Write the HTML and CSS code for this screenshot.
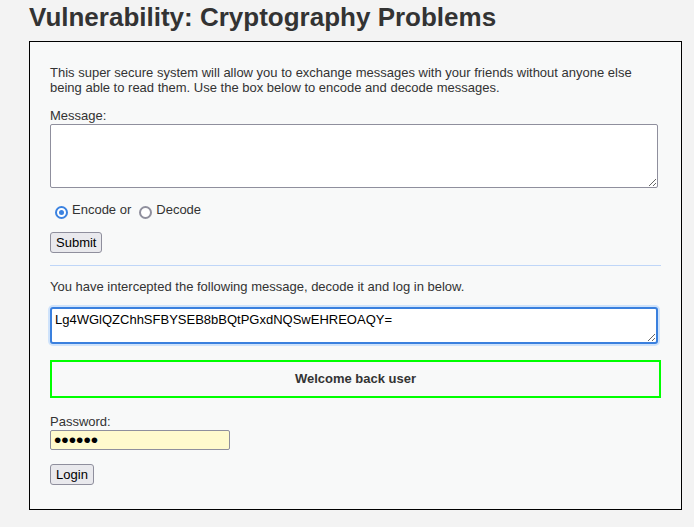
FILE: index.html
```html
<!DOCTYPE html>
<html>
<head>
<meta charset="utf-8">
<link rel="stylesheet" href="styles.css">
</head>
<body>
<div class="page">
  <h1 class="title">Vulnerability: Cryptography Problems</h1>
  <div class="area">
    <p class="intro">This super secure system will allow you to exchange messages with your friends without anyone else being able to read them. Use the box below to encode and decode messages.</p>
    <div class="label first">Message:</div>
    <textarea class="msg"></textarea>
    <div class="radios">
      <input type="radio" class="radio" name="d" checked><span class="rlabel">Encode or</span>
      <input type="radio" class="radio second" name="d"><span class="rlabel">Decode</span>
    </div>
    <button class="btn submit">Submit</button>
    <div class="rule"></div>
    <p class="line">You have intercepted the following message, decode it and log in below.</p>
    <textarea class="msg focused">Lg4WGlQZChhSFBYSEB8bBQtPGxdNQSwEHREOAQY=</textarea>
    <div class="welcome">Welcome back user</div>
    <div class="label pw">Password:</div>
    <input type="password" class="pass" value="abc123">
    <button class="btn login">Login</button>
  </div>
</div>
</body>
</html>
```

FILE: styles.css
```css
html, body {
  margin: 0;
  padding: 0;
  background: #f3f3f3;
}
body {
  font-family: "Liberation Sans", Arial, sans-serif;
  font-size: 13px;
  color: #333;
}
.page {
  padding: 0 12px 0 29px;
}
.title {
  margin: 0;
  font-size: 26px;
  line-height: 34px;
  font-weight: bold;
  color: #333;
  height: 41px;
}
.area {
  border: 1px solid #000;
  background: #f8f9f9;
  padding: 23px 20px 24px 20px;
  display: flex;
  flex-direction: column;
  align-items: flex-start;
}
.intro {
  margin: 0;
  line-height: 15px;
  width: 100%;
}
.label {
  line-height: 15px;
}
.label.first {
  margin-top: 13px;
}
.msg {
  display: block;
  box-sizing: border-box;
  width: 608px;
  height: 64px;
  margin: 1px 0 0 0;
  border: 1px solid #8f8f9d;
  border-radius: 2px;
  background: #fff;
  font-family: "Liberation Sans", Arial, sans-serif;
  font-size: 13px;
  color: #000;
  padding: 2px 3px;
}
.msg.focused {
  margin-top: 13px;
  height: 37px;
  border: 2px solid #3a80de;
  border-radius: 3px;
  box-shadow: 0 0 0 2px #cfe3fb;
  padding: 3px 3px;
  line-height: 15px;
  outline: none;
}
.radios {
  margin-top: 13px;
  height: 18px;
  display: flex;
  align-items: flex-start;
}
.radio {
  -webkit-appearance: none;
  appearance: none;
  box-sizing: border-box;
  width: 13px;
  height: 13px;
  margin: 5px 4px 0 5px;
  border: 2px solid #8f8f9d;
  border-radius: 50%;
  background: #fff;
  position: relative;
}
.radio:checked {
  border-color: #3b82e0;
}
.radio:checked::after {
  content: "";
  position: absolute;
  left: 2px;
  top: 2px;
  width: 5px;
  height: 5px;
  border-radius: 50%;
  background: #3b82e0;
}
.radio.second {
  margin-left: 8px;
}
.rlabel {
  line-height: 15px;
  margin-top: 1px;
}
.btn {
  font-family: "Liberation Sans", Arial, sans-serif;
  font-size: 13px;
  color: #000;
  background: #e9e9ed;
  border: 1px solid #8f8f9d;
  border-radius: 3px;
  height: 21px;
  padding: 0 5px;
  line-height: 17px;
}
.submit {
  margin-top: 13px;
  width: 52px;
}
.login {
  margin-top: 14px;
  width: 44px;
}
.rule {
  width: 100%;
  height: 1px;
  background: #bfd6f8;
  margin-top: 12px;
}
.line {
  margin: 13px 0 0 0;
  line-height: 15px;
}
.welcome {
  box-sizing: border-box;
  width: 100%;
  height: 38px;
  margin-top: 16px;
  border: 2px solid #00ff00;
  text-align: center;
  font-weight: bold;
  line-height: 34px;
  color: #333;
}
.label.pw {
  margin-top: 16px;
}
.pass {
  box-sizing: border-box;
  width: 180px;
  height: 20px;
  margin: 1px 0 0 0;
  border: 1px solid #8f8f9d;
  border-radius: 2px;
  background: #fffacd;
  padding: 0 3px;
  font-size: 21px;
  line-height: 18px;
  letter-spacing: 0;
  color: #000;
}
```
